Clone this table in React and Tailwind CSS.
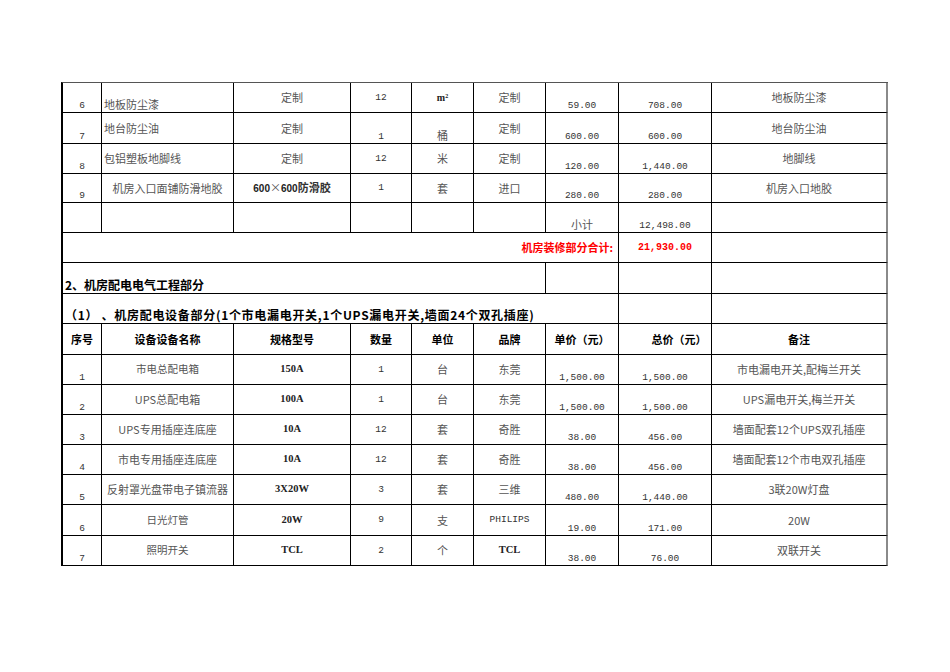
import React from "react";

const CN = "font-['Noto_Sans_CJK_SC',sans-serif] text-[11px] text-[#555]";
const CN10 = "font-['Noto_Sans_CJK_SC',sans-serif] text-[10.5px] text-[#555]";
const NUM = "font-['Liberation_Mono','Noto_Sans_CJK_SC',monospace] text-[9.5px] text-[#333]";
const SPEC = "font-['Liberation_Serif','Noto_Sans_CJK_SC',serif] font-bold text-[10.5px] text-[#222]";
const HDR = "font-['Noto_Sans_CJK_SC',sans-serif] font-bold text-[11px] text-black";
const SEC = "font-['Noto_Sans_CJK_SC',sans-serif] font-bold text-[12px] text-black";
const RED = "font-['Noto_Sans_CJK_SC',sans-serif] font-bold text-[11px] text-[#ff0000]";
const REDNUM = "font-['Liberation_Mono',monospace] font-bold text-[10px] text-[#ff0000]";

function Cell({ t = "", f = CN, v = "c", h = "c", span = "", last = false, extra = "" }) {
  const va = v === "b" ? "items-end pb-[2px]" : "items-center";
  const ha = h === "l" ? "justify-start" : h === "r" ? "justify-end" : "justify-center";
  const br = last ? "border-r-2 border-r-[#8a8a8a]" : "border-r border-r-black";
  return (
    <div className={`${span} ${br} border-b border-b-black flex ${va} ${ha} px-[2px] overflow-hidden whitespace-nowrap leading-none ${f} ${extra}`}>
      {t}
    </div>
  );
}

const items = [
  ["1", "市电总配电箱", "150A", "1", "台", "东莞", "1,500.00", "1,500.00", "市电漏电开关,配梅兰开关"],
  ["2", "UPS总配电箱", "100A", "1", "台", "东莞", "1,500.00", "1,500.00", "UPS漏电开关,梅兰开关"],
  ["3", "UPS专用插座连底座", "10A", "12", "套", "奇胜", "38.00", "456.00", "墙面配套12个UPS双孔插座"],
  ["4", "市电专用插座连底座", "10A", "12", "套", "奇胜", "38.00", "456.00", "墙面配套12个市电双孔插座"],
  ["5", "反射罩光盘带电子镇流器", "3X20W", "3", "套", "三维", "480.00", "1,440.00", "3联20W灯盘"],
  ["6", "日光灯管", "20W", "9", "支", "PHILIPS", "19.00", "171.00", "20W"],
  ["7", "照明开关", "TCL", "2", "个", "TCL", "38.00", "76.00", "双联开关"],
];

export default function App() {
  return (
    <div className="w-[950px] h-[672px] bg-white pt-[82px] pl-[61px]">
      <div className="grid w-[827px] border-t border-t-[#555] border-l-2 border-l-black grid-cols-[39px_132px_117px_61px_62px_72px_73px_93px_176px] grid-rows-[30px_31px_30px_29px_30px_30px_31px_30px_31px_30px_30px_30px_30px_30px_31px_30px]">
        {/* row 1 */}
        <Cell t="6" f={NUM} v="b" />
        <Cell t="地板防尘漆" h="l" v="b" />
        <Cell t="定制" />
        <Cell t="12" f={NUM} />
        <Cell t={<span className="font-['Liberation_Serif',serif] font-bold text-[10px] text-[#222]">m<sup className="text-[6px]">2</sup></span>} />
        <Cell t="定制" />
        <Cell t="59.00" f={NUM} v="b" />
        <Cell t="708.00" f={NUM} v="b" />
        <Cell t="地板防尘漆" last />
        {/* row 2 */}
        <Cell t="7" f={NUM} v="b" />
        <Cell t="地台防尘油" h="l" />
        <Cell t="定制" />
        <Cell t="1" f={NUM} v="b" />
        <Cell t="桶" v="b" />
        <Cell t="定制" />
        <Cell t="600.00" f={NUM} v="b" />
        <Cell t="600.00" f={NUM} v="b" />
        <Cell t="地台防尘油" last />
        {/* row 3 */}
        <Cell t="8" f={NUM} v="b" />
        <Cell t="包铝塑板地脚线" h="l" />
        <Cell t="定制" />
        <Cell t="12" f={NUM} />
        <Cell t="米" />
        <Cell t="定制" />
        <Cell t="120.00" f={NUM} v="b" />
        <Cell t="1,440.00" f={NUM} v="b" />
        <Cell t="地脚线" last />
        {/* row 4 */}
        <Cell t="9" f={NUM} v="b" />
        <Cell t="机房入口面铺防滑地胶" />
        <Cell t={<span><span className="font-['Liberation_Sans',sans-serif] font-bold text-[10px] text-[#222]">600</span>×<span className="font-['Liberation_Sans',sans-serif] font-bold text-[10px] text-[#222]">600</span><span className="font-bold text-[#333]">防滑胶</span></span>} />
        <Cell t="1" f={NUM} />
        <Cell t="套" />
        <Cell t="进口" />
        <Cell t="280.00" f={NUM} v="b" />
        <Cell t="280.00" f={NUM} v="b" />
        <Cell t="机房入口地胶" last />
        {/* row 5 */}
        <Cell />
        <Cell />
        <Cell />
        <Cell />
        <Cell />
        <Cell />
        <Cell t="小计" v="b" />
        <Cell t="12,498.00" f={NUM} v="b" />
        <Cell last />
        {/* row 6 */}
        <Cell t="机房装修部分合计:" f={RED} h="r" span="col-span-7" extra="pr-[5px]" />
        <Cell t="21,930.00" f={REDNUM} />
        <Cell last />
        {/* row 7 */}
        <Cell t="2、机房配电电气工程部分" f={SEC} h="l" v="b" span="col-span-6" />
        <Cell />
        <Cell />
        <Cell last />
        {/* row 8 */}
        <Cell t="（1） 、机房配电设备部分(1个市电漏电开关,1个UPS漏电开关,墙面24个双孔插座)" f={SEC} h="l" v="b" span="col-span-7" extra="px-0 tracking-[0.7px]" />
        <Cell />
        <Cell last />
        {/* header */}
        <Cell t="序号" f={HDR} />
        <Cell t="设备设备名称" f={HDR} />
        <Cell t="规格型号" f={HDR} />
        <Cell t="数量" f={HDR} />
        <Cell t="单位" f={HDR} />
        <Cell t="品牌" f={HDR} />
        <Cell t="单价（元）" f={HDR} />
        <Cell t="总价（元）" f={HDR} extra="pl-[30px]" />
        <Cell t="备注" f={HDR} last />
        {items.map((r) => (
          <React.Fragment key={r[0]}>
            <Cell t={r[0]} f={NUM} v="b" />
            <Cell t={r[1]} f={r[1].length <= 6 ? CN10 : CN} />
            <Cell t={r[2]} f={SPEC} />
            <Cell t={r[3]} f={NUM} />
            <Cell t={r[4]} />
            <Cell t={r[5]} f={r[5] === "PHILIPS" ? NUM : r[5] === "TCL" ? SPEC : CN} />
            <Cell t={r[6]} f={NUM} v="b" />
            <Cell t={r[7]} f={NUM} v="b" />
            <Cell t={r[8]} last />
          </React.Fragment>
        ))}
      </div>
    </div>
  );
}
